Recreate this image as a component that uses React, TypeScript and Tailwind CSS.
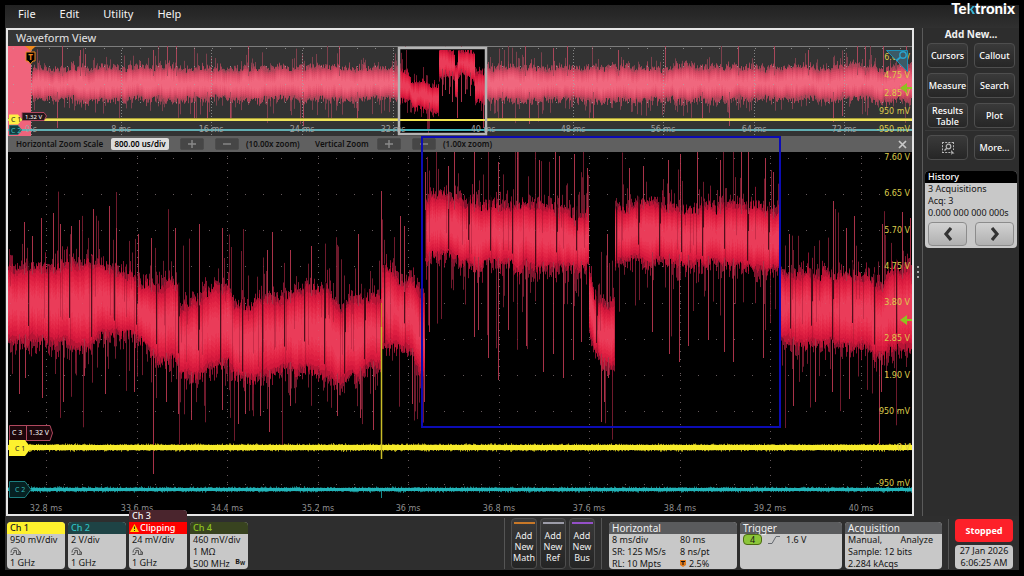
import type { ReactNode } from "react";

/* ---------- deterministic signal model ---------- */

function makeRandom(seed: number) {
  let s = seed;
  return () => {
    s = (s + 0x6d2b79f5) | 0;
    let t = Math.imul(s ^ (s >>> 15), 1 | s);
    t = (t + Math.imul(t ^ (t >>> 7), 61 | t)) ^ t;
    return ((t ^ (t >>> 14)) >>> 0) / 4294967296;
  };
}

type Knot = [x: number, top: number, bottom: number];

function envelopeAt(knots: Knot[], x: number): [number, number] {
  for (let i = 1; i < knots.length; i++) {
    const a = knots[i - 1];
    const b = knots[i];
    if (x <= b[0]) {
      const f = (x - a[0]) / (b[0] - a[0]);
      return [a[1] + (b[1] - a[1]) * f, a[2] + (b[2] - a[2]) * f];
    }
  }
  const last = knots[knots.length - 1];
  return [last[1], last[2]];
}

const col = (x: number, a: number, b: number) => `M${x + 0.5} ${a.toFixed(1)}V${b.toFixed(1)}`;

const ZOOM_W = 904;
const ZOOM_H = 362;
const OVER_H = 90;

const zoomKnots: Knot[] = [
  [0, 115, 190], [42, 114, 191], [72, 110, 196], [92, 108, 190], [104, 116, 184], [122, 121, 184],
  [134, 130, 194], [144, 132, 204], [152, 134, 210], [162, 126, 208], [170, 134, 214], [172, 153, 224],
  [188, 148, 230], [195, 142, 222], [207, 133, 214], [220, 136, 214], [226, 152, 224], [242, 154, 230],
  [256, 144, 228], [280, 144, 218], [300, 136, 218], [318, 136, 224], [330, 156, 230], [350, 146, 224],
  [372, 146, 214], [374, 112, 196], [386, 118, 198], [396, 132, 198], [402, 126, 200], [412, 142, 222],
  [416, 145, 226], [417, 50, 110], [424, 43, 106], [440, 49, 104], [460, 51, 112], [480, 53, 114],
  [500, 51, 114], [530, 48, 118], [550, 58, 118], [566, 66, 118], [580, 60, 116], [581, 120, 180],
  [586, 148, 200], [596, 150, 214], [606, 146, 212], [607, 54, 112], [620, 54, 108], [640, 48, 108],
  [664, 54, 110], [700, 54, 112], [740, 54, 116], [771, 60, 118], [773, 118, 190], [790, 120, 194],
  [830, 120, 196], [862, 124, 198], [873, 134, 210], [880, 120, 200], [904, 118, 196],
];

const zoomUp: [number, number][] = [
  [16, 70], [24, 84], [33, 66], [45, 61], [52, 72], [63, 74], [71, 68], [85, 57], [101, 54], [108, 76],
  [130, 82], [143, 86], [167, 76], [191, 72], [214, 76], [259, 98], [264, 80], [282, 98], [303, 94],
  [350, 82], [373, 39], [392, 64], [396, 74], [417, 20], [440, 14], [446, 0], [466, 0], [490, 10],
  [509, 0], [531, 8], [547, 0], [551, 4], [566, 2], [579, 16], [599, 82], [621, 16], [635, 14],
  [660, 8], [672, 2], [689, 0], [712, 8], [733, 0], [740, 0], [757, 6], [765, 20], [781, 82], [825, 49],
  [838, 76], [846, 64], [874, 72], [894, 60], [902, 66],
];

const zoomDown: [number, number][] = [
  [11, 242], [17, 226], [34, 246], [55, 250], [76, 224], [97, 242], [126, 240], [145, 322], [158, 250],
  [170, 262], [183, 268], [214, 258], [230, 272], [237, 262], [252, 264], [261, 280], [282, 254], [329, 264],
  [352, 266], [365, 278], [404, 252], [416, 250], [421, 180], [466, 185], [470, 178], [480, 206],
  [490, 228], [500, 178], [518, 194], [535, 220], [545, 202], [555, 226], [565, 208], [573, 190],
  [593, 270], [596, 250], [600, 226], [644, 180], [661, 202], [671, 210], [680, 194], [700, 188], [716, 200],
  [725, 210], [755, 206], [785, 254], [807, 250], [824, 240], [841, 247], [871, 292], [873, 240],
];

const LAYERS = 7;

function buildTrace(
  knots: Knot[], width: number, height: number, seed: number, jitter: number, spike: number,
  period: number, ups: [number, number][], downs: [number, number][],
) {
  const rnd = makeRandom(seed);
  let faint = "", halo = "", cut = "", shade = "", bright = "";
  const layers: string[] = Array.from({ length: LAYERS }, () => "");
  const clampT = (v: number) => Math.max(0, v);
  const clampB = (v: number) => Math.min(height, v);
  let lumpT = 0;
  let lumpB = 0;
  let nextCut = period ? 20 : Infinity;
  for (let x = 0; x < width; x++) {
    let [t, b] = envelopeAt(knots, x);
    const h = b - t;
    lumpT = lumpT * 0.8 + (rnd() - 0.5) * jitter * 0.5;
    lumpB = lumpB * 0.8 + (rnd() - 0.5) * jitter * 0.5;
    const coreT = t + lumpT + h * 0.02;
    const coreB = b + lumpB - h * 0.02;
    t += lumpT + (rnd() - 0.4) * jitter;
    b += lumpB + (rnd() - 0.6) * jitter;
    halo += col(x, clampT(t - rnd() * rnd() * spike * 0.4), clampB(b + rnd() * rnd() * spike * 0.4));
    if (rnd() < 0.28) faint += col(x, clampT(t - rnd() * rnd() * spike * 2.2), t + 4);
    if (rnd() < 0.28) faint += col(x, b - 4, clampB(b + rnd() * rnd() * spike * 2.2));
    const wobble = 0.85 + rnd() * 0.3;
    layers[0] += col(x, clampT(t), b);
    for (let k = 1; k < LAYERS; k++) {
      const inset = h * 0.36 * (k / (LAYERS - 1)) * wobble;
      layers[k] += col(x, clampT(coreT + inset), coreB - inset);
    }
    if (x >= nextCut) {
      cut += col(x, clampT(t - 6), t + h * (0.6 + rnd() * 0.4));
      shade += col(x + 1, clampT(t - 4), b);
      if (rnd() < 0.4) cut += col(x + 1, clampT(t - 6), t + h * 0.35);
      nextCut = x + period - 2 + Math.floor(rnd() * 4);
    } else if (period && rnd() < 0.1) {
      shade += col(x, t, t + h * (0.2 + rnd() * 0.8));
    }
  }
  for (const [x, y] of ups) bright += col(x, y, envelopeAt(knots, x)[0] + 8);
  for (const [x, y] of downs) bright += col(x, envelopeAt(knots, x)[1] - 8, y);
  return { faint, halo, layers, cut, shade, bright };
}

const zoomTrace = buildTrace(zoomKnots, ZOOM_W, ZOOM_H, 7, 9, 42, 22, zoomUp, zoomDown);

const overKnots: Knot[] = [[22, 34, 46], [25, 23, 54], [60, 22, 54], [500, 22, 54], [904, 21, 54]];
const overUp: [number, number][] = [
  [54, 0], [72, 4], [77, 8], [145, 4], [159, 0], [168, 0], [240, 0], [331, 0], [517, 0], [545, 2], [559, 0],
  [610, 4], [657, 0], [730, 0], [766, 0], [800, 4], [849, 0], [857, 0], [875, 0], [898, 0],
];
const overDown: [number, number][] = [
  [49, 82], [186, 74], [199, 74], [222, 74], [295, 80], [349, 74], [494, 74], [521, 78], [585, 74],
  [694, 74], [721, 80], [825, 76], [834, 70],
];
const overTrace = buildTrace(overKnots, ZOOM_W, OVER_H, 21, 6, 13, 0, overUp, overDown);

const lensKnots: Knot[] = [
  [0, 20, 50], [10, 24, 52], [14, 32, 58], [39, 34, 62], [40, -2, 26], [55, 0, 30], [56, 12, 50], [58, 12, 50],
  [59, -2, 26], [75, 0, 32], [76, 22, 52], [86, 24, 54],
];
const lensTrace = buildTrace(
  lensKnots, 86, 84, 5, 7, 14, 0, [],
  [[30, 70], [43, 46], [46, 40], [50, 44], [53, 52], [58, 68], [62, 52], [66, 44], [71, 46], [84, 78]],
);

/* Graticule: dotted vertical majors plus dots along the horizontal divisions. */
function gridDots(height: number, firstRow: number, rowStep: number, majors: number[], dotStep: number) {
  let d = "";
  for (const m of majors) for (let y = 4; y < height; y += dotStep) d += `M${m} ${Math.floor(y) + 0.5}h1`;
  for (let y = firstRow; y < height; y += rowStep)
    for (let x = majors[0] % 18; x < ZOOM_W; x += 18.1) d += `M${x.toFixed(0)} ${Math.floor(y) + 0.5}h1`;
  return d;
}

const zoomMajors = [38, 129, 219, 310, 400, 491, 581, 672, 762, 853];
const overMajors = [23, 113, 203, 294, 385, 475, 565, 655, 746, 836];

const zoomGrid = gridDots(ZOOM_H, 6, 36.25, zoomMajors, 7.25);
const overGrid = gridDots(OVER_H, 2, 18, overMajors, 3);

const pctX = (x: number) => `${(x / ZOOM_W) * 100}%`;

/* Baseline fuzz of the flat channels */
function fuzz(seed: number, y: number, half: number, amount: number, width = ZOOM_W) {
  const rnd = makeRandom(seed);
  let d = "";
  for (let x = 0; x < width; x++) d += col(x, y - half - rnd() * rnd() * amount, y + half + rnd() * rnd() * amount);
  return d;
}
const yellowBand = fuzz(3, 295.5, 2.5, 2);
const cyanBand = fuzz(4, 337.5, 1.5, 2);

type Trace = typeof zoomTrace;

const saturated = {
  faint: "#6e1a2c",
  halo: "#86122e",
  bright: "#a83248",
  layers: ["#b81435", "#d3183c", "#dd1e41", "#e32646", "#e72e4d", "#e93553", "#ea3c59"],
};
const muted = {
  faint: "#7d404c",
  halo: "#964453",
  bright: "#a9475a",
  layers: ["#b04458", "#c8465e", "#d84c66", "#e2526c", "#e95a74", "#ed6178", "#f0677e"],
};

function TraceShape({ t, colors }: { t: Trace; colors: typeof saturated }) {
  return (
    <g fill="none" strokeWidth="1">
      <path d={t.faint} stroke={colors.faint} />
      <path d={t.halo} stroke={colors.halo} />
      {t.layers.map((d, i) => (
        <path key={i} d={d} stroke={colors.layers[i]} />
      ))}
      <path d={t.shade} stroke="#7a0c26" strokeOpacity="0.3" />
      <path d={t.cut} stroke="#1c0309" strokeOpacity="0.75" />
      <path d={t.bright} stroke={colors.bright} />
    </g>
  );
}

/* ---------- panels ---------- */

const zoomTimes = ["32.8 ms", "33.6 ms", "34.4 ms", "35.2 ms", "36 ms", "36.8 ms", "37.6 ms", "38.4 ms", "39.2 ms", "40 ms"];
const overTimes = ["0 s", "8 ms", "16 ms", "24 ms", "32 ms", "40 ms", "48 ms", "56 ms", "64 ms", "72 ms"];
const zoomVolts = ["7.60 V", "6.65 V", "5.70 V", "4.75 V", "3.80 V", "2.85 V", "1.90 V", "950 mV", "0 V", "-950 mV"];
const overVolts = ["6.65 V", "4.75 V", "2.85 V", "950 mV", "-950 mV"];

function TimeAxis({ labels, xs, className }: { labels: string[]; xs: number[]; className: string }) {
  return (
    <>
      {labels.map((l, i) => (
        <span
          key={l}
          className={`absolute -translate-x-1/2 font-['DejaVu_Sans',sans-serif] text-[8px] leading-[10px] whitespace-nowrap ${className}`}
          style={{ left: pctX(xs[i]) }}
        >
          {l}
        </span>
      ))}
    </>
  );
}

function VoltAxis({ labels, first, step, height }: { labels: string[]; first: number; step: number; height: number }) {
  return (
    <>
      {labels.map((l, i) => (
        <span
          key={l}
          className="absolute right-0.5 -translate-y-1/2 font-['DejaVu_Sans',sans-serif] text-[8px] leading-3 whitespace-nowrap text-[#dccb4c]"
          style={{ top: `${((first + i * step) / height) * 100}%` }}
        >
          {l}
        </span>
      ))}
    </>
  );
}

function TriggerArrow() {
  return (
    <svg width="12" height="10" viewBox="0 0 12 10" aria-hidden="true">
      <path d="M0 5L7 0V4H12V6H7V10Z" fill="#8fc31f" />
    </svg>
  );
}

function Overview() {
  return (
    <div className="relative h-[90px] overflow-hidden bg-[#333333]">
      <svg className="absolute inset-0 h-full w-full" viewBox="0 0 904 90" preserveAspectRatio="none" aria-label="Record overview">
        <path d="M0 0.5H904" stroke="#7d7d7d" />
        <TraceShape t={overTrace} colors={muted} />
        <rect x="0" y="0" width="23" height="90" fill="#f0647c" />
        <path d={overGrid} stroke="#a8a8a8" strokeOpacity="0.7" />
        <rect x="0" y="72" width="904" height="3" fill="#a89f38" />
        <rect x="0" y="73" width="904" height="2" fill="#efe35a" />
        <rect x="0" y="83" width="904" height="2" fill="#62b0b4" />
        <rect x="390" y="1" width="89" height="88" fill="#000" />
        <g transform="translate(391 4)">
          <TraceShape t={lensTrace} colors={saturated} />
        </g>
        <path d="M391 74H478" stroke="#f2e44e" strokeWidth="2" />
        <path d="M391 84H478" stroke="#3fb4ba" strokeWidth="2" />
        <rect x="391" y="2" width="87" height="86" fill="none" stroke="#b4b4b4" strokeWidth="2.5" />
      </svg>
      <TimeAxis labels={overTimes} xs={overMajors} className="bottom-px text-[#a0a0a0]" />
      <VoltAxis labels={overVolts} first={12} step={18} height={90} />
      <svg className="absolute top-1 right-1" width="22" height="22" viewBox="0 0 22 22" aria-hidden="true">
        <path d="M0.5 0.5H21.5V21.5Z" fill="#3c5a66" stroke="#1d8eb4" />
        <circle cx="17" cy="5" r="3.200" fill="none" stroke="#2aa3cc" strokeWidth="1.400" />
        <path d="M14.500 7.200L10.500 10.500" stroke="#2aa3cc" strokeWidth="1.800" />
      </svg>
      <span className="absolute top-[37px] right-0 flex"><TriggerArrow /></span>
      <svg className="absolute top-0 left-0" width="50" height="90" viewBox="0 0 50 90" fontFamily="'Noto Sans', sans-serif">
        <path d="M17 0H28L22.5 5Z" fill="#ee8a1f" />
        <path d="M18 6H27V15H25L22.5 18L20 15H18Z" fill="#000" stroke="#ee8a1f" />
        <text x="22.5" y="14" fontSize="8" fontWeight="700" fill="#ee8a1f" textAnchor="middle">T</text>
        <path d="M14 66.500H36L38.500 70L36 74.500H14Z" fill="#24171b" stroke="#b0485e" />
        <text x="17" y="73" fontSize="6" fill="#fff">1.32 V</text>
        <path d="M1 68.500H10L14 73.500L10 78.500H1Z" fill="#fdf144" />
        <text x="3" y="76" fontSize="7" fill="#222">C 1</text>
        <path d="M1.500 79.500H10L13.500 84L10 88.500H1.500Z" fill="#123c3e" stroke="#2a6a6c" />
        <text x="3" y="86.500" fontSize="7" fill="#3fc0c0">C 2</text>
      </svg>
    </div>
  );
}

function ZoomStepper({ name, scale }: { name: string; scale: string }) {
  const btn =
    "flex h-3 w-6 items-center justify-center rounded-xs border border-[#4c4c4c] bg-[#464646] text-[#8a8a8a]";
  return (
    <>
      <button type="button" aria-label={`${name} zoom in`} className={btn}>
        <svg width="8" height="8" viewBox="0 0 8 8"><path d="M4 0V8M0 4H8" stroke="currentColor" strokeWidth="1.4" /></svg>
      </button>
      <button type="button" aria-label={`${name} zoom out`} className={`ml-[11px] ${btn}`}>
        <svg width="8" height="8" viewBox="0 0 8 8"><path d="M0 4H8" stroke="currentColor" strokeWidth="1.4" /></svg>
      </button>
      <span className="ml-[7px] w-[56px]">{scale}</span>
    </>
  );
}

function ZoomBar() {
  return (
    <div className="flex h-4 items-center bg-[#606060] pr-1 pl-2 text-[8px] leading-3 font-semibold whitespace-nowrap text-[#101010]">
      <label htmlFor="hscale" className="w-[89px]">Horizontal Zoom Scale</label>
      <input
        id="hscale"
        defaultValue="800.00 us/div"
        className="mr-[11px] ml-1.5 h-3 w-[58px] rounded-xs bg-[#dcdcdc] text-center text-[8px] font-semibold text-black"
      />
      <ZoomStepper name="Horizontal" scale="(10.00x zoom)" />
      <span className="mr-2 ml-[13px] w-[54px]">Vertical Zoom</span>
      <ZoomStepper name="Vertical" scale="(1.00x zoom)" />
      <button type="button" aria-label="Close zoom" className="ml-auto flex size-3 items-center justify-center text-[#c9c9c9]">
        <svg width="9" height="9" viewBox="0 0 9 9"><path d="M1 1L8 8M8 1L1 8" stroke="currentColor" strokeWidth="1.700" /></svg>
      </button>
    </div>
  );
}

function ZoomPlot() {
  return (
    <div className="relative min-h-[300px] flex-1 overflow-hidden bg-black">
      <svg className="absolute inset-0 h-full w-full" viewBox="0 0 904 362" preserveAspectRatio="none" aria-label="Zoomed waveform">
        <path d={zoomGrid} stroke="#a0a0a0" strokeOpacity="0.5" />
        <TraceShape t={zoomTrace} colors={saturated} />
        <path d={zoomGrid} stroke="#c08090" strokeOpacity="0.2" />
        <path d={yellowBand} stroke="#b9ae18" />
        <rect x="0" y="293" width="904" height="5" fill="#f7ec2c" />
        <path d="M373.500 151V175" stroke="#d08a20" />
        <path d="M373.500 175V307" stroke="#c8bc28" strokeWidth="1.500" />
        <path d="M373.500 337V346" stroke="#178a8c" />
        <path d={cyanBand} stroke="#168486" />
        <rect x="0" y="336" width="904" height="3" fill="#22b4b8" />
      </svg>
      <TimeAxis labels={zoomTimes} xs={zoomMajors} className="bottom-0 text-[#8e8e8e]" />
      <VoltAxis labels={zoomVolts} first={6} step={36.25} height={362} />
      <span className="absolute top-[45%] right-0 flex"><TriggerArrow /></span>
      <svg className="absolute bottom-4 left-0" width="48" height="74" viewBox="0 0 48 74" fontFamily="'Noto Sans', sans-serif">
        <path d="M1.500 1.500H42L44.500 9L42 16.500H1.500Z" fill="#1c060b" stroke="#b0485e" />
        <path d="M18.500 1.500V16.500" stroke="#b0485e" />
        <text x="4" y="11" fontSize="7" fill="#fff">C 3</text>
        <text x="21" y="11" fontSize="7" fill="#fff">1.32 V</text>
        <path d="M1 16H17L23 24L17 32H1Z" fill="#fdf12e" />
        <text x="7" y="27" fontSize="7" fill="#222">C 1</text>
        <path d="M1.500 57.500H17L23 65.500L17 73.500H1.500Z" fill="#062022" stroke="#1c7c7e" />
        <text x="7" y="68" fontSize="7" fill="#35b8b8">C 2</text>
      </svg>
    </div>
  );
}

function SideButton({ children, label }: { children: ReactNode; label?: string }) {
  return (
    <button
      type="button"
      aria-label={label}
      className="flex h-[25px] items-center justify-center rounded border border-[#4e4e4e] bg-linear-to-b from-[#3a3a3a] to-[#262626] text-center text-[9px] leading-[11px] font-medium text-white"
    >
      {children}
    </button>
  );
}

function Sidebar() {
  return (
    <aside className="flex w-[97px] shrink-0 flex-col border-l border-[#5a5a5a] bg-[#2d2d2d] px-0.5">
      <h2 className="text-center text-[10px] leading-3 font-bold text-[#f0f0f0]">Add New...</h2>
      <div className="mt-[3px] grid grid-cols-2 gap-x-1.5 gap-y-[5px] px-0.5">
        <SideButton>Cursors</SideButton>
        <SideButton>Callout</SideButton>
        <SideButton>Measure</SideButton>
        <SideButton>Search</SideButton>
        <SideButton>Results<br />Table</SideButton>
        <SideButton>Plot</SideButton>
      </div>
      <div className="mt-0.5 grid grid-cols-2 gap-x-1.5 border-t border-[#3a3a3a] px-0.5 pt-1">
        <SideButton label="Zoom to area">
          <svg width="14" height="14" viewBox="0 0 14 14" fill="none" stroke="#b8b8b8">
            <path d="M1 1.500H12M1.500 1V12M1 11.500H10M12.500 1V9" strokeDasharray="2 1.200" />
            <circle cx="7.500" cy="5.500" r="2.300" strokeWidth="1.200" />
            <path d="M5.800 7.200L3.500 9.500" strokeWidth="1.400" />
            <path d="M10 9L13.500 12.500H11.500L10.500 14Z" fill="#b8b8b8" stroke="none" />
          </svg>
        </SideButton>
        <SideButton>More...</SideButton>
      </div>
      <section className="mt-[11px] overflow-hidden rounded-sm bg-[#c8c8c8] text-[9px] leading-3 text-[#151515]">
        <h3 className="bg-black px-[3px] font-medium text-white">History</h3>
        <div className="px-[3px] pb-0.5 whitespace-nowrap">
          <p>3 Acquisitions</p>
          <p>Acq: 3</p>
          <p>0.000 000 000 000s</p>
          <div className="mt-[3px] grid grid-cols-2 gap-2">
            <button type="button" aria-label="Previous acquisition" className="flex h-6 items-center justify-center rounded-sm border border-[#8c8c8c] bg-linear-to-b from-[#d2d2d2] to-[#b0b0b0]">
              <svg width="10" height="14" viewBox="0 0 10 14"><path d="M8 1L3 7L8 13" fill="none" stroke="#333" strokeWidth="3.200" /></svg>
            </button>
            <button type="button" aria-label="Next acquisition" className="flex h-6 items-center justify-center rounded-sm border border-[#8c8c8c] bg-linear-to-b from-[#d2d2d2] to-[#b0b0b0]">
              <svg width="10" height="14" viewBox="0 0 10 14"><path d="M2 1L7 7L2 13" fill="none" stroke="#333" strokeWidth="3.200" /></svg>
            </button>
          </div>
        </div>
      </section>
    </aside>
  );
}

function ProbeIcon() {
  return (
    <svg width="11" height="9" viewBox="0 0 11 9" fill="none" stroke="#4a4a4a" strokeWidth="0.9" aria-hidden="true">
      <path d="M0.500 7.500H3L3.500 5H5.500" />
      <path d="M1 5.500C1 2.500 3 1 5 1S8.500 2 9 4.500V7.500" />
      <path d="M3.500 3.500H6.500V7.500H10.500V5L9 4.500" />
    </svg>
  );
}

function ChannelBadge({ head, headClass, children, extra }: { head: ReactNode; headClass: string; children: ReactNode; extra?: ReactNode }) {
  return (
    <button type="button" className="flex w-[58px] flex-col overflow-hidden rounded-sm bg-[#c8c8c8] text-left text-[9px] leading-3 whitespace-nowrap text-[#151515]">
      {extra}
      <span className={`flex h-3 w-full items-center px-[3px] font-medium ${headClass}`}>{head}</span>
      <span className="flex h-[35px] w-full flex-col px-[3px]">{children}</span>
    </button>
  );
}

function InfoPanel({ title, className, children }: { title: string; className: string; children: ReactNode }) {
  return (
    <section className={`flex h-[47px] flex-col overflow-hidden rounded-sm bg-[#c8c8c8] text-[9px] leading-[11px] whitespace-nowrap text-[#151515] ${className}`}>
      <h3 className="h-3 bg-[#5a5b5d] px-[3px] text-[10px] leading-3 text-[#f2f2f2]">{title}</h3>
      <div className="px-[3px]">{children}</div>
    </section>
  );
}

function AddButton({ kind, color }: { kind: string; color: string }) {
  return (
    <button type="button" className="flex h-[51px] w-[26px] flex-col items-center justify-start rounded border border-[#4e4e4e] bg-linear-to-b from-[#3a3a3a] to-[#242424] text-center text-[9px] text-[#f0f0f0]">
      <span className={`mt-[3px] mb-1.5 h-0.5 w-[21px] shrink-0 ${color}`} />
      <span className="leading-[11px]">Add<br />New<br />{kind}</span>
    </button>
  );
}

function SettingsBar() {
  return (
    <footer className="relative z-10 flex h-[54px] items-end">
      <div className="flex items-end gap-[3px] pb-px pl-0.5">
        <ChannelBadge head="Ch 1" headClass="bg-[#fff12d] text-[#222]">
          <span>950 mV/div</span><span className="flex h-3 items-center"><ProbeIcon /></span><span>1 GHz</span>
        </ChannelBadge>
        <ChannelBadge head="Ch 2" headClass="bg-[#1e4345] text-[#2fc0c0]">
          <span>2 V/div</span><span className="flex h-3 items-center"><ProbeIcon /></span><span>1 GHz</span>
        </ChannelBadge>
        <ChannelBadge
          extra={<span className="h-3 w-full bg-[#4a252d] px-[3px] font-medium text-[#f4f4f4]">Ch 3</span>}
          head={
            <>
              <svg className="mr-px -ml-0.5" width="9" height="8" viewBox="0 0 9 8"><path d="M4.500 0L9 8H0Z" fill="#ffd400" /><path d="M4.500 2.500V5M4.500 6V7" stroke="#222" /></svg>
              Clipping
            </>
          }
          headClass="bg-[#fd0000] text-white"
        >
          <span>24 mV/div</span><span className="flex h-3 items-center"><ProbeIcon /></span><span>1 GHz</span>
        </ChannelBadge>
        <ChannelBadge head="Ch 4" headClass="bg-[#38431f] text-[#8fc31f]">
          <span>460 mV/div</span><span>1 MΩ</span>
          <span className="flex justify-between">500 MHz <b className="text-[7px] leading-2">B<sub>W</sub></b></span>
        </ChannelBadge>
      </div>
      <div className="ml-auto flex items-end pr-1.5 pb-px">
        <div className="mr-[7px] flex gap-[3px] border-x border-[#555] px-1.5">
          <AddButton kind="Math" color="bg-[#c87828]" />
          <AddButton kind="Ref" color="bg-[#9c9ca8]" />
          <AddButton kind="Bus" color="bg-[#9450c8]" />
        </div>
        <div className="flex gap-[3px]">
          <InfoPanel title="Horizontal" className="w-[128px]">
            <dl className="grid grid-cols-[68px_1fr] gap-y-px">
              <dd>8 ms/div</dd><dd>80 ms</dd>
              <dd>SR: 125 MS/s</dd><dd>8 ns/pt</dd>
              <dd>RL: 10 Mpts</dd>
              <dd className="flex items-center gap-[3px]">
                <svg width="6" height="7" viewBox="0 0 6 7"><path d="M0 0H6V5L3 7L0 5Z" fill="#e07a1c" /><path d="M1 1.500H5M3 1.500V5" stroke="#111" /></svg>
                2.5%
              </dd>
            </dl>
          </InfoPanel>
          <InfoPanel title="Trigger" className="w-[102px]">
            <div className="flex items-center">
              <span className="h-[11px] w-[19px] rounded-sm border border-[#4c6a14] bg-[#8cc63a] text-center leading-[9px]">4</span>
              <svg className="mx-1.5" width="12" height="8" viewBox="0 0 12 8"><path d="M0 7.500H4L8 0.500H12" fill="none" stroke="#666a70" /></svg>
              1.6 V
            </div>
          </InfoPanel>
          <InfoPanel title="Acquisition" className="w-[97px]">
            <div className="flex flex-col gap-px">
              <div className="flex justify-between pr-1.5"><span>Manual,</span><span>Analyze</span></div>
              <div>Sample: 12 bits</div>
              <div>2.284 kAcqs</div>
            </div>
          </InfoPanel>
        </div>
        <div className="ml-1.5 border-l border-[#555] pl-1.5">
          <button type="button" className="block h-[23px] w-[58px] rounded bg-[#fd2029] text-[9px] font-bold text-white">Stopped</button>
          <div className="mt-[3px] h-6 w-[58px] rounded bg-[#c8c8c8] text-center text-[9px] leading-[12px] whitespace-nowrap text-[#151515]">
            27 Jan 2026<br />6:06:25 AM
          </div>
        </div>
      </div>
    </footer>
  );
}

export default function App() {
  return (
    <div className="flex min-h-screen flex-col bg-black px-[5px] pt-[5px] pb-1.5 font-['Noto_Sans',sans-serif]">
      <header className="flex h-[23px] shrink-0 items-start justify-between bg-linear-to-b from-[#222] to-[#303030]">
        <nav className="flex gap-6 pl-[13px] text-[11px] leading-[18px] text-[#f4f4f4]">
          <button type="button">File</button>
          <button type="button">Edit</button>
          <button type="button">Utility</button>
          <button type="button">Help</button>
        </nav>
        <div className="-mt-[5px] mr-1 font-['Lato',sans-serif] text-[15px] leading-4 font-black text-white">
          Te<span className="bg-linear-to-r from-white from-20% to-[#35b6d6] to-40% bg-clip-text text-transparent">k</span>tronix
        </div>
      </header>
      <div className="flex flex-1 flex-col bg-[#2e2e2e]">
        <div className="flex flex-1">
          <main className="relative ml-px flex min-w-0 flex-1 flex-col border-2 border-[#e6e6e6]">
            <h1 className="h-4 bg-[#353535] pl-2 text-[11px] leading-4 text-[#e4e4e4]">Waveform View</h1>
            <Overview />
            <ZoomBar />
            <ZoomPlot />
            <div className="pointer-events-none absolute top-[22%] right-[14.5%] bottom-[17.8%] left-[45.7%] border-2 border-[#0c0cb4]" />
          </main>
          <div className="flex w-2 shrink-0 items-center justify-center">
            <svg width="3" height="12" viewBox="0 0 3 12" fill="#a8a8a8"><rect width="2" height="2" /><rect y="5" width="2" height="2" /><rect y="10" width="2" height="2" /></svg>
          </div>
          <Sidebar />
        </div>
        <SettingsBar />
      </div>
    </div>
  );
}
